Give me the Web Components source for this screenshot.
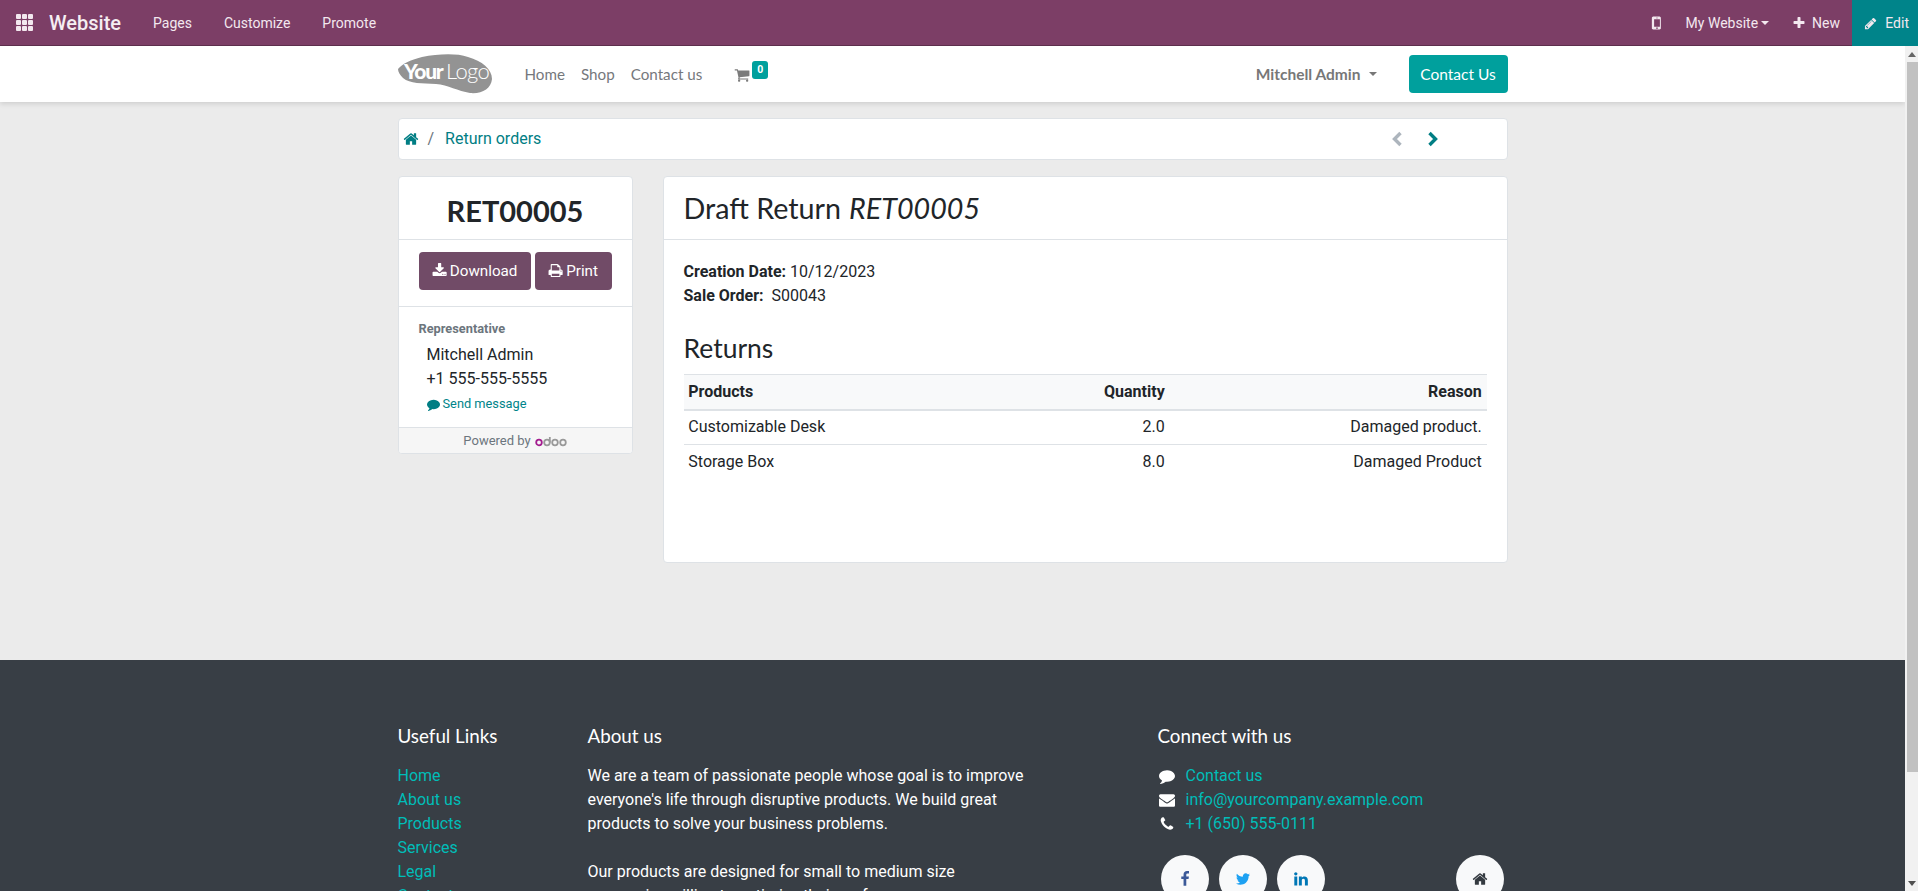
<!DOCTYPE html>
<html lang="en"><head><meta charset="utf-8"><title>Return orders</title>
<style>html,body{margin:0;height:100%;overflow:hidden;background:#ebebeb}body{font:16px/24px Roboto,sans-serif;color:#212529}</style>
</head><body><o-app></o-app>
<script>
const P={
home:"M1472 992v480q0 26-19 45t-45 19h-384v-384h-256v384h-384q-26 0-45-19t-19-45v-480q0-1 .5-3t.5-3l575-474 575 474q1 2 1 6zm223-69l-62 74q-8 9-21 11h-3q-13 0-21-7l-692-577-692 577q-12 8-24 7-13-2-21-11l-62-74q-8-10-7-23.5t11-21.5l719-599q32-26 76-26t76 26l244 204v-195q0-14 9-23t23-9h192q14 0 23 9t9 23v408l219 182q10 8 11 21.5t-7 23.5z",
download:"M1344 1344q0-26-19-45t-45-19-45 19-19 45 19 45 45 19 45-19 19-45zm256 0q0-26-19-45t-45-19-45 19-19 45 19 45 45 19 45-19 19-45zm128-224v320q0 40-28 68t-68 28h-1472q-40 0-68-28t-28-68v-320q0-40 28-68t68-28h465l135 136q58 56 136 56t136-56l136-136h464q40 0 68 28t28 68zm-325-569q17 41-14 70l-448 448q-18 19-45 19t-45-19l-448-448q-31-29-14-70 17-39 59-39h256v-448q0-26 19-45t45-19h256q26 0 45 19t19 45v448h256q42 0 59 39z",
print:"M448 1536h896v-256h-896v256zm0-640h896v-384h-160q-40 0-68-28t-28-68v-160h-640v640zm1152 64q0-26-19-45t-45-19-45 19-19 45 19 45 45 19 45-19 19-45zm128 0v416q0 13-9.5 22.5t-22.5 9.5h-224v160q0 40-28 68t-68 28h-960q-40 0-68-28t-28-68v-160h-224q-13 0-22.5-9.5t-9.5-22.5v-416q0-79 56.5-135.5t135.5-56.5h64v-544q0-40 28-68t68-28h672q40 0 88 20t76 48l152 152q28 28 48 76t20 88v256h64q79 0 135.5 56.5t56.5 135.5z",
cart:"M704 1536q0 52-38 90t-90 38-90-38-38-90 38-90 90-38 90 38 38 90zm896 0q0 52-38 90t-90 38-90-38-38-90 38-90 90-38 90 38 38 90zm128-1088v512q0 24-16.5 42.5t-40.5 21.5l-1044 122q13 60 13 70 0 16-24 64h920q26 0 45 19t19 45-19 45-45 19h-1024q-26 0-45-19t-19-45q0-11 8-31.5t16-36 21.5-40 15.5-29.5l-177-823h-204q-26 0-45-19t-19-45 19-45 45-19h256q16 0 28.5 6.5t19.5 15.5 13 24.5 8 26 5.5 29.5 4.5 26h1201q26 0 45 19t19 45z",
comment:"M1792 896q0 174-120 321.5t-326 233-450 85.5q-70 0-145-8-198 175-460 242-49 14-114 22-17 2-30.5-9t-17.5-29v-1q-3-4-.5-12t2-10 4.5-9.5l6-9 7-8.5 8-9q7-8 31-34.5t34.5-38 31-39.5 32.5-51 27-59 26-76q-157-89-247.5-220t-90.5-281q0-130 71-248.5t191-204.5 286-136.5 348-50.5q244 0 450 85.5t326 233 120 321.5z",
envelope:"M1792 710v794q0 66-47 113t-113 47h-1472q-66 0-113-47t-47-113v-794q44 49 101 87 362 246 497 345 57 42 92.5 65.5t94.5 48 110 24.5h2q51 0 110-24.5t94.5-48 92.5-65.5q170-123 498-345 57-39 100-87zm0-294q0 79-49 151t-122 123q-376 261-468 325-10 7-42.5 30.5t-54 38-52 32.5-57.5 27-50 9h-2q-23 0-50-9t-57.5-27-52-32.5-54-38-42.5-30.5q-91-64-262-182.5t-205-142.5q-62-42-117-115.5t-55-136.5q0-78 41.5-130t118.5-52h1472q65 0 112.5 47t47.5 113z",
phone:"M1600 1240q0 27-10 70.5t-21 68.5q-21 50-122 106-94 51-186 51-27 0-53-3.5t-57.5-12.5-47-14.5-55.5-20.5-49-18q-98-35-175-83-127-79-264-216t-216-264q-48-77-83-175-3-9-18-49t-20.5-55.5-14.5-47-12.5-57.5-3.5-53q0-92 51-186 56-101 106-122 25-11 68.5-21t70.5-10q14 0 21 3 18 6 53 76 11 19 30 54t35 63.5 31 53.5q3 4 17.5 25t21.5 35.5 7 28.5q0 20-28.5 50t-62 55-62 53-28.5 46q0 9 5 22.5t8.5 20.5 14 24 11.5 19q76 137 174 235t235 174q2 1 19 11.5t24 14 20.5 8.5 22.5 5q18 0 46-28.5t53-62 55-62 50-28.5q14 0 28.5 7t35.5 21.5 25 17.5q25 15 53.5 31t63.5 35 54 30q70 35 76 53 3 7 3 21z",
facebook:"M1343 12v264h-157q-86 0-116 36t-30 108v189h293l-39 296h-254v759h-306v-759h-255v-296h255v-218q0-186 104-288.5t277-102.5q147 0 228 12z",
twitter:"M1684 408q-67 98-162 167 1 14 1 42 0 130-38 259.5t-115.5 248.5-184.5 210.5-258 146-323 54.5q-271 0-496-145 35 4 76 4 225 0 401-138-105-2-188-64.5t-114-159.5q33 5 61 5 43 0 85-11-112-23-185.5-111.5t-73.5-205.5v-4q68 38 146 41-66-44-105-115t-39-154q0-88 44-163 121 149 294.5 238.5t371.5 99.5q-8-38-8-74 0-134 94.5-228.5t228.5-94.5q140 0 236 102 109-21 205-78-37 115-142 178 92-10 184-50z",
linkedin:"M477 625v991h-330v-991h330zm21-306q1 73-50.5 122t-135.5 49h-2q-82 0-132-49t-50-122q0-74 51.5-122.5t134.5-48.5 133 48.5 51 122.5zm1166 729v568h-329v-530q0-105-40.5-164.5t-126.5-59.5q-63 0-105.5 34.5t-63.5 85.5q-11 30-11 81v553h-329q2-399 2-647t-1-296l-1-48h329v144h-2q20-32 41-56t56.5-52 87-43.5 114.5-15.5q171 0 275 113.5t104 332.5z",
pencil:"M491 1536l91-91-235-235-91 91v107h128v128h107zm523-928q0-22-22-22-10 0-17 7l-542 542q-7 7-7 17 0 22 22 22 10 0 17-7l542-542q7-7 7-17zm-54-192l416 416-832 832h-416v-416zm683 96q0 53-37 90l-166 166-416-416 166-165q36-38 90-38 53 0 91 38l235 234q37 39 37 91z",
plus:"M1600 736v192q0 40-28 68t-68 28h-416v416q0 40-28 68t-68 28h-192q-40 0-68-28t-28-68v-416h-416q-40 0-68-28t-28-68v-192q0-40 28-68t68-28h416v-416q0-40 28-68t68-28h192q40 0 68 28t28 68v416h416q40 0 68 28t28 68z",
mobile:"M976 1408q0-33-23.5-56.5t-56.5-23.5-56.5 23.5-23.5 56.5 23.5 56.5 56.5 23.5 56.5-23.5 23.5-56.5zm208-160v-704q0-13-9.5-22.5t-22.5-9.5h-512q-13 0-22.5 9.5t-9.5 22.5v704q0 13 9.5 22.5t22.5 9.5h512q13 0 22.5-9.5t9.5-22.5zm-192-848q0-16-16-16h-160q-16 0-16 16t16 16h160q16 0 16-16zm288-16v1024q0 52-38 90t-90 38h-640q-52 0-90-38t-38-90v-1024q0-52 38-90t90-38h640q52 0 90 38t38 90z"
};
function def(name,html){customElements.define(name,class extends HTMLElement{
  connectedCallback(){ if(this.shadowRoot) return; const r=this.attachShadow({mode:"open"}); r.innerHTML=typeof html==="function"?html(this):html; }
});}
def("fa-i",h=>`<style>:host{display:inline-block;width:1em;height:1em;line-height:0;vertical-align:-.125em}svg{width:100%;height:100%;fill:currentColor;display:block}</style><svg viewBox="0 0 1792 1792" aria-hidden="true"><path d="${P[h.getAttribute("name")]}"/></svg>`);

def("o-topbar",`<style>
:host{display:flex;align-items:center;height:46px;box-sizing:border-box;background:#7c3e66;border-bottom:1px solid #5d2e4c;color:#f3e8ef;font:14px/20px Roboto,sans-serif;flex:none}
.grid{display:grid;grid-template-columns:repeat(3,5px);grid-auto-rows:5px;gap:1px;margin-left:16px}
.grid i{background:#f3e8ef;border-radius:1px}
.brand{font:500 20px/24px Roboto,sans-serif;color:#f5eef3;margin-left:16px;margin-right:32px}
.m{margin-right:32px}
.sp{flex:1}
.mob{font-size:18px;margin-right:20px;display:flex}
.mine{display:flex;align-items:center;margin-right:23px}
.caret{width:0;height:0;border:4px solid transparent;border-top-color:currentColor;border-bottom:0;margin-left:3px}
.new{display:flex;align-items:center;gap:6px;margin-right:12px}
.new fa-i{font-size:14px}
.edit{display:flex;align-items:center;gap:8px;height:46px;background:#00848a;padding:0 9px 0 12px;width:66px;box-sizing:border-box;margin-bottom:-1px}
.edit fa-i{font-size:15px}
</style><div class="grid"><i></i><i></i><i></i><i></i><i></i><i></i><i></i><i></i><i></i></div>
<span class="brand">Website</span><span class="m">Pages</span><span class="m">Customize</span><span class="m">Promote</span><span class="sp"></span>
<span class="mob"><fa-i name="mobile"></fa-i></span><span class="mine">My Website<span class="caret"></span></span>
<span class="new"><fa-i name="plus"></fa-i>New</span><span class="edit"><fa-i name="pencil"></fa-i>Edit</span>`);

def("o-logo",`<style>:host{display:block;width:95px;height:40px}svg{display:block}</style>
<svg width="95" height="40" viewBox="0 0 95 40"><path d="M0 15C4 10 12 6 24 3 40 0 58-1 70 3 84 7 94 15 94 25 93 35 84 40 72 39 60 37 50 31 38 30 24 29 12 30 5 24 2 21 0 18 0 15Z" fill="#939393"/>
<text x="6" y="25" font-family="Lato,sans-serif" font-weight="900" font-size="21" fill="#fff" letter-spacing="-1.2">Your</text>
<text x="48" y="25" font-family="Lato,sans-serif" font-weight="300" font-size="22" fill="#fff" letter-spacing="-.6">Logo</text></svg>`);

def("o-header",`<style>
:host{display:block;height:56px;background:#fff;box-shadow:0 2px 5px rgba(0,0,0,.12);position:relative;z-index:1;flex:none;font:16px/24px Lato,sans-serif;color:#75787c}
.c{width:1110px;margin:0 auto;height:100%;display:flex;align-items:center}
nav{display:flex;gap:16px;margin-left:32px;font-size:15.2px}
.cart{position:relative;margin-left:32px;display:flex;font-size:16px;margin-top:2px;color:#7b7b7b}
.b{position:absolute;left:18px;top:-6px;width:16px;height:18px;border-radius:3px;background:#00a09d;color:#fff;font:700 10.5px/18px Roboto,sans-serif;text-align:center}
.sp{flex:1}
.user{font-weight:700;font-size:15.5px;color:#777;display:flex;align-items:center;margin-right:32px}
.caret{width:0;height:0;border:4px solid transparent;border-top-color:currentColor;border-bottom:0;margin-left:8px}
.btn{background:#00a09d;color:#fff;border-radius:4px;height:38px;width:99px;display:flex;align-items:center;justify-content:center;font-size:15.5px}
</style><div class="c"><o-logo></o-logo><nav><span>Home</span><span>Shop</span><span>Contact us</span></nav>
<span class="cart"><fa-i name="cart"></fa-i><span class="b">0</span></span><span class="sp"></span>
<span class="user">Mitchell Admin<span class="caret"></span></span><span class="btn">Contact Us</span></div>`);

def("o-breadcrumb",`<style>
:host{display:flex;align-items:center;height:42px;box-sizing:border-box;background:#fff;border:1px solid #dee2e6;border-radius:4px;padding:0 4px;color:#017e84}
.s{color:#6c757d;margin:0 11px 0 9px}
.h{font-size:16px;display:flex}
.sp{flex:1}
svg{display:block}
.nx{margin-right:64px;display:flex;gap:24px}
</style><span class="h"><fa-i name="home"></fa-i></span><span class="s">/</span><span>Return orders</span><span class="sp"></span>
<span class="nx"><svg width="12" height="16" viewBox="0 0 12 16"><path d="M9.5 2 3.5 8l6 6" fill="none" stroke="#adb5bd" stroke-width="3.4"/></svg><svg width="12" height="16" viewBox="0 0 12 16"><path d="M2.5 2l6 6-6 6" fill="none" stroke="#017e84" stroke-width="3.4"/></svg></span>`);

def("o-btn",`<style>:host{display:inline-flex;align-items:center;justify-content:center;gap:3px;height:38px;box-sizing:border-box;background:#714b67;color:#fff;border-radius:4px;font:15.2px/24px Roboto,sans-serif}</style><slot></slot>`);

def("o-odoo",`<style>:host{display:inline-block;width:32px;height:12px;vertical-align:-2px}svg{display:block}</style>
<svg width="32" height="12" viewBox="0 0 32 12" fill="none" stroke-width="1.8"><circle cx="4" cy="7.5" r="2.8" stroke="#a41d8f"/><circle cx="12" cy="7.5" r="2.8" stroke="#999"/><path d="M14.8 2v5.5" stroke="#999"/><circle cx="20" cy="7.5" r="2.8" stroke="#999"/><circle cx="28" cy="7.5" r="2.8" stroke="#999"/></svg>`);

def("o-sidebar",`<style>
:host{display:block;width:235px;flex:none;height:278px;box-sizing:border-box;background:#fff;border:1px solid #dee2e6;border-radius:4px;overflow:hidden}
h2{margin:0;height:63px;box-sizing:border-box;border-bottom:1px solid #dee2e6;padding-top:5px;display:flex;align-items:center;justify-content:center;font:700 29px/36px Lato,sans-serif;color:#212529}
.acts{height:67px;box-sizing:border-box;border-bottom:1px solid #dee2e6;display:flex;gap:4px;padding:12px 0 0 20px}
.dl{width:112px}.pr{width:77px}
o-btn fa-i{font-size:15.2px}
.rep{height:120px;box-sizing:border-box;padding:12px 20px 0}
.t{font:700 12.8px/19px Roboto,sans-serif;color:#6c757d}
.n{padding-left:8px;margin-top:5px}
.msg{padding-left:8px;font-size:12.8px;line-height:20px;color:#00848a;margin-top:3px;display:flex;align-items:center;gap:3px}
.msg fa-i{font-size:13px;color:#017e84}
.pw{height:26px;background:#f6f6f6;border-top:1px solid #dee2e6;display:flex;justify-content:center;align-items:center;gap:4px;font-size:13px;color:#6c757d;line-height:20px;box-sizing:border-box}
</style><h2>RET00005</h2>
<div class="acts"><o-btn class="dl"><fa-i name="download"></fa-i>Download</o-btn><o-btn class="pr"><fa-i name="print"></fa-i>Print</o-btn></div>
<div class="rep"><div class="t">Representative</div><div class="n">Mitchell Admin</div><div class="n" style="margin-top:0">+1 555-555-5555</div><div class="msg"><fa-i name="comment"></fa-i>Send message</div></div>
<div class="pw">Powered by <o-odoo></o-odoo></div>`);

def("o-detail",`<style>
:host{display:block;flex:1;height:387px;box-sizing:border-box;background:#fff;border:1px solid #dee2e6;border-radius:4px}
h1{margin:0;height:63px;box-sizing:border-box;border-bottom:1px solid #dee2e6;padding:0 20px;display:flex;align-items:center;gap:.28em;font:400 28.7px/36px Lato,sans-serif;color:#212529}
h1 em{font-style:italic}
.b{padding:20px 20px 0}
b{font-weight:700}
h3{margin:24px 0 0;font:400 26.5px/32px Lato,sans-serif;height:36px}
table{width:100%;border-collapse:collapse;table-layout:fixed;margin-top:6px}
th,td{padding:4.8px;line-height:24px;border-top:1px solid #dee2e6;text-align:right;font-weight:400}
th{background:#f8f9fa;font-weight:700;border-bottom:2px solid #dee2e6}
tr>:first-child{text-align:left}
tbody tr:first-child td{border-top:0}
</style><h1><span>Draft Return</span> <em>RET00005</em></h1><div class="b">
<div><b>Creation Date:</b> 10/12/2023</div><div><b>Sale Order:</b>&nbsp; S00043</div>
<h3>Returns</h3>
<table><colgroup><col style="width:386px"><col style="width:100px"><col></colgroup><thead><tr><th>Products</th><th>Quantity</th><th>Reason</th></tr></thead>
<tbody><tr><td>Customizable Desk</td><td>2.0</td><td>Damaged product.</td></tr><tr><td>Storage Box</td><td>8.0</td><td>Damaged Product</td></tr></tbody></table></div>`);

def("o-social",h=>`<style>:host{display:flex;width:48px;height:48px;border-radius:50%;background:#f8f9fa;align-items:center;justify-content:center;flex:none;font-size:16px;color:${h.getAttribute("c")}}</style><slot></slot>`);

def("o-footer",`<style>
:host{display:block;background:#383e45;color:#fff;flex:1;min-height:0;overflow:hidden}
.c{width:1110px;margin:0 auto;display:flex;padding-top:64px}
h5{margin:0 0 16px;font:400 18.8px/24px Lato,sans-serif}
.links{width:190px}
.about{width:570px}
.con{flex:1}
a{color:#00bdb8;text-decoration:none;display:block}
p{margin:0;width:440px}
.r{display:flex;align-items:center}
.r fa-i{width:16px;height:16px;margin:0 11px 0 1px;flex:none;color:#fff}
.soc{display:flex;gap:10px;margin:19px 0 0 3px;width:343px}
.gap{flex:1}
</style><div class="c">
<div class="links"><h5>Useful Links</h5><a>Home</a><a>About us</a><a>Products</a><a>Services</a><a>Legal</a><a>Contact us</a></div>
<div class="about"><h5>About us</h5><p>We are a team of passionate people whose goal is to improve everyone's life through disruptive products. We build great products to solve your business problems.</p><br><p>Our products are designed for small to medium size companies willing to optimize their performance.</p></div>
<div class="con"><h5>Connect with us</h5>
<div class="r"><fa-i name="comment"></fa-i><a>Contact us</a></div><div class="r"><fa-i name="envelope"></fa-i><a>info@yourcompany.example.com</a></div><div class="r"><fa-i name="phone"></fa-i><a>+1 (650) 555-0111</a></div>
<div class="soc"><o-social c="#3b5998"><fa-i name="facebook"></fa-i></o-social><o-social c="#1da1f2"><fa-i name="twitter"></fa-i></o-social><o-social c="#0077b5"><fa-i name="linkedin"></fa-i></o-social><span class="gap"></span><o-social c="#343a40"><fa-i name="home"></fa-i></o-social></div></div></div>`);

def("o-scrollbar",`<style>
:host{display:flex;flex-direction:column;width:13px;background:#f1f1f1;flex:none;align-items:flex-end;position:relative}
.a{height:16px;width:13px;display:flex;align-items:center;justify-content:center;flex:none}
.up{width:0;height:0;border:4px solid transparent;border-bottom:5px solid #666;border-top:0}
.dn{width:0;height:0;border:4px solid transparent;border-top:5px solid #505050;border-bottom:0}
.th{width:11px;height:710px;background:#c1c1c1;flex:none}
.sp{flex:1}
</style><div class="a"><span class="up"></span></div><div class="th"></div><div class="sp"></div><div class="a"><span class="dn"></span></div>`);

def("o-app",`<style>
:host{display:flex;flex-direction:column;height:100vh;overflow:hidden}
.row{flex:1;display:flex;min-height:0}
.page{flex:1;display:flex;flex-direction:column;overflow:hidden;min-width:0}
main{background:#ebebeb;flex:none;height:558px;box-sizing:border-box;padding-top:16px}
.c{width:1110px;margin:0 auto}
.cols{display:flex;gap:30px;margin-top:16px}
</style><o-topbar></o-topbar><div class="row"><div class="page"><o-header></o-header>
<main><div class="c"><o-breadcrumb></o-breadcrumb><div class="cols"><o-sidebar></o-sidebar><o-detail></o-detail></div></div></main>
<o-footer></o-footer></div><o-scrollbar></o-scrollbar></div>`);
</script></body></html>
